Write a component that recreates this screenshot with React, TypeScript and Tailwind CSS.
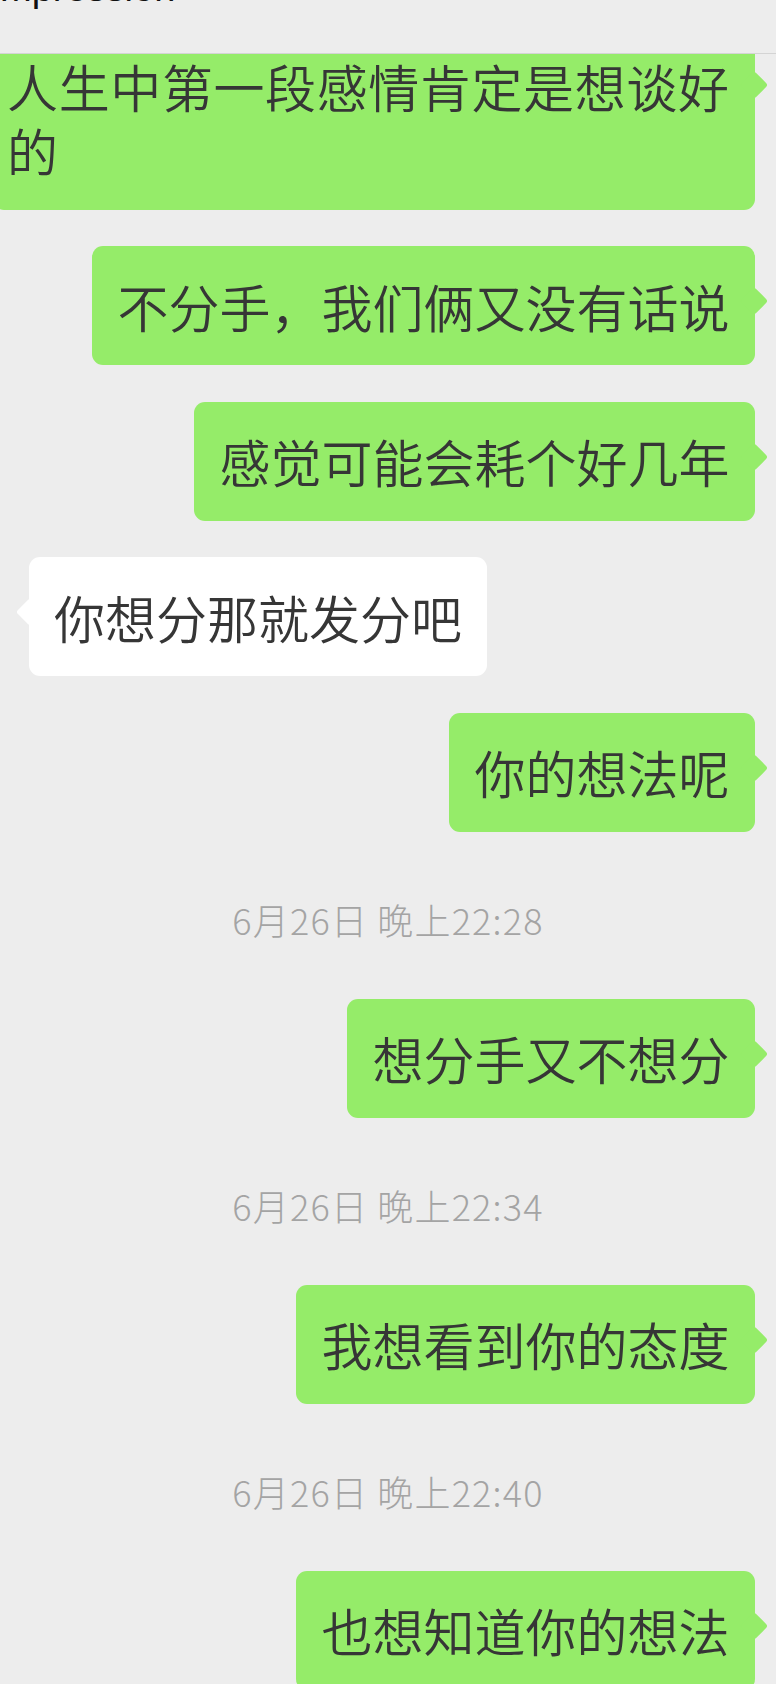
const CJK = '"Noto Sans CJK SC", "Noto Sans", sans-serif'

type Msg =
  | { kind: 'me'; text: string }
  | { kind: 'them'; text: string }
  | { kind: 'time'; text: string }

const messages: Msg[] = [
  { kind: 'me', text: '不分手，我们俩又没有话说' },
  { kind: 'me', text: '感觉可能会耗个好几年' },
  { kind: 'them', text: '你想分那就发分吧' },
  { kind: 'me', text: '你的想法呢' },
  { kind: 'time', text: '6月26日 晚上22:28' },
  { kind: 'me', text: '想分手又不想分' },
  { kind: 'time', text: '6月26日 晚上22:34' },
  { kind: 'me', text: '我想看到你的态度' },
  { kind: 'time', text: '6月26日 晚上22:40' },
  { kind: 'me', text: '也想知道你的想法' },
]

function Bubble({ text, mine }: { text: string; mine: boolean }) {
  return (
    <div className={mine ? 'flex justify-end pr-[21.5px]' : 'flex justify-start pl-[29px]'}>
      <div
        className={
          'relative rounded-[11px] px-[25px] pt-[27.5px] pb-[27.5px] text-[51px] font-[350] leading-[64px] text-[#363636] whitespace-nowrap ' +
          (mine ? 'bg-[#95ec69]' : 'bg-white')
        }
      >
        <span
          className={
            'absolute top-[45px] w-[20px] h-[20px] rotate-45 rounded-[3px] ' +
            (mine ? 'right-[-9px] bg-[#95ec69]' : 'left-[-9px] bg-white')
          }
        />
        <span className="relative">{text}</span>
      </div>
    </div>
  )
}

export default function App() {
  let prev: Msg['kind'] | null = 'me'
  return (
    <div className="w-[776px] h-[1684px] overflow-hidden bg-[#ededed]" style={{ fontFamily: CJK }}>
      {/* cut-off title bar */}
      <div className="h-[54px] overflow-hidden border-b border-[#d4d4d4] bg-[#ededed] relative z-10">
        <div
          className="mt-[-32px] text-[38px] leading-[40px] text-[#111]"
          style={{ fontFamily: '"Liberation Sans", Arial, sans-serif' }}
        >
          mpression
        </div>
      </div>

      {/* first bubble, top edge hidden under the bar */}
      <div className="flex justify-end pr-[21.5px]">
        <div className="relative shrink-0 rounded-b-[11px] bg-[#95ec69] pl-[14px] pr-[25px] pt-0 pb-[27.5px] text-[51px] font-[350] leading-[64px] text-[#363636] whitespace-nowrap tracking-[0.6px]">
          <span className="absolute top-[21px] right-[-9px] w-[20px] h-[20px] rotate-45 rounded-[3px] bg-[#95ec69]" />
          <span className="relative">
            人生中第一段感情肯定是想谈好
            <br />的
          </span>
        </div>
      </div>

      {messages.map((m, i) => {
        let mt = 'mt-[36.5px]'
        if (m.kind === 'time') mt = 'mt-[63px]'
        else if (prev === 'time') mt = 'mt-[56px]'
        prev = m.kind
        if (m.kind === 'time') {
          return (
            <div
              key={i}
              className={mt + ' text-center text-[36px] font-light leading-[48px] tracking-[1.2px] text-[#a4a4a4]'}
            >
              {m.text}
            </div>
          )
        }
        return (
          <div key={i} className={mt}>
            <Bubble text={m.text} mine={m.kind === 'me'} />
          </div>
        )
      })}
    </div>
  )
}
